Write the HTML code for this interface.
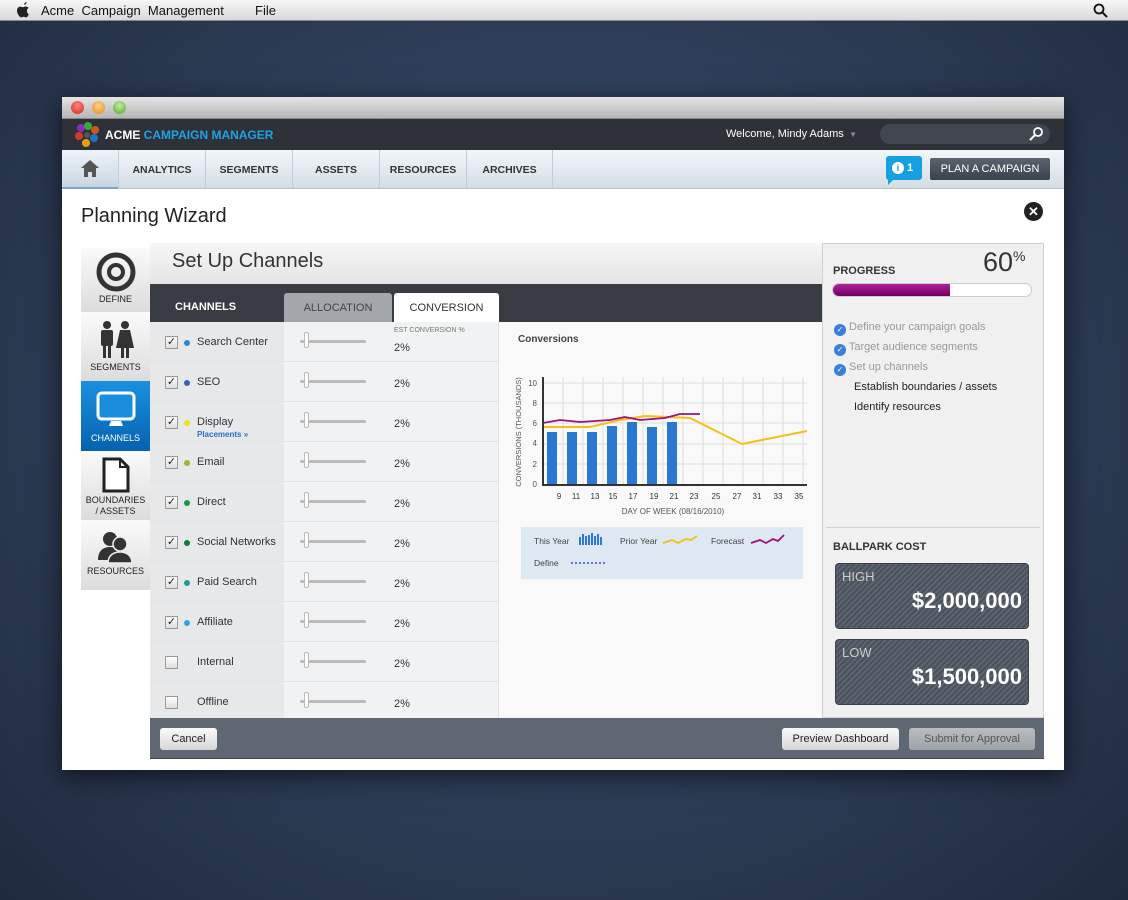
<!DOCTYPE html>
<html><head><meta charset="utf-8"><style>
*{margin:0;padding:0;box-sizing:border-box}
body{width:1128px;height:900px;overflow:hidden;position:relative;font-family:"Liberation Sans",sans-serif;background:radial-gradient(ellipse at 50% 45%,#3c4d6a 0%,#2e3d57 55%,#1f2a3e 100%)}
.a{position:absolute}
.menubar{left:0;top:0;width:1128px;height:21px;background:linear-gradient(#f7f7f7,#d9d9d9);border-bottom:1px solid #8a8a8a;font-size:13px;color:#111}
.win{left:62px;top:97px;width:1002px;height:673px;background:#fff;box-shadow:0 6px 25px rgba(0,0,0,.6)}
.tb{left:0;top:0;width:1002px;height:22px;background:linear-gradient(#e4e4e4,#b6b6b6);border-bottom:1px solid #888}
.dot{width:13px;height:13px;border-radius:50%;top:4px}
.hdr{left:0;top:22px;width:1002px;height:31px;background:#2e3137}
.nav{left:0;top:53px;width:1002px;height:39px;background:linear-gradient(#f2f6f9,#d4dde5);border-bottom:1px solid #b7c0c8}
.ni{top:0;height:39px;border-left:1px solid #c3ccd4;font-size:10.5px;font-weight:bold;color:#333;text-align:center;line-height:40px}
.side{left:19px;width:69px;background:linear-gradient(#fafafa,#dcdcdc);font-size:9px;color:#222;text-align:center}
.row{left:88px;width:672px;height:40px;border-bottom:1px solid #e0e2e4}
.cb{left:15px;top:14px;width:13px;height:13px;border:1px solid #999;background:linear-gradient(#fff,#ddd);font-size:11px;line-height:11px;text-align:center;color:#222}
.cd{left:34px;top:18px;width:6px;height:6px;border-radius:50%}
.nm{left:47px;top:14px;font-size:11px;color:#333}
.sl{left:150px;top:18px;width:66px;height:3px;background:#bbb;border-radius:2px}
.kn{left:154px;top:10px;width:5px;height:16px;background:#fff;border:1px solid #bbb;border-radius:2px}
.pc{left:244px;top:16px;font-size:11px;color:#333}
.btn{height:22px;border-radius:3px;background:linear-gradient(#fafafa,#d6d6d6);font-size:11px;color:#222;text-align:center;line-height:22px}
.cost{left:14px;width:194px;height:66px;border-radius:4px;background:repeating-linear-gradient(135deg,#4a515c 0 2px,#5c646f 2px 4px);border:1px solid #3a4048}
</style></head><body>
<div class="a menubar">
<svg class="a" style="left:16px;top:2px" width="15" height="17" viewBox="0 0 15 17"><path d="M10.5 0c.2 1.3-.9 2.8-2.3 2.9C8 1.6 9.2.2 10.5 0zM12.8 12.2c-.6 1.4-1.5 3.2-2.7 3.2-1 0-1.3-.6-2.5-.6s-1.5.6-2.5.6C3.900 15.400 1 12 1 8.600 1 6 2.700 4.600 4.300 4.600c1 0 1.800.6 2.500.6.6 0 1.600-.7 2.800-.7.5 0 2 .1 3 1.500-2.500 1.500-2 5 .2 6.200z" fill="#222"/></svg>
<div class="a" style="left:41px;top:3px">Acme&nbsp; Campaign&nbsp; Management</div>
<div class="a" style="left:255px;top:3px">File</div>
<svg class="a" style="left:1093px;top:3px" width="15" height="15"><circle cx="6" cy="6" r="4.5" stroke="#111" stroke-width="1.8" fill="none"/><path d="M9.500 9.500L14 14" stroke="#111" stroke-width="2"/></svg>
</div>

<div class="a win">
<div class="a tb">
<div class="a dot" style="left:9px;background:radial-gradient(circle at 50% 35%,#ff8a80,#d2201a)"></div>
<div class="a dot" style="left:30px;background:radial-gradient(circle at 50% 35%,#ffd28a,#e58a12)"></div>
<div class="a dot" style="left:51px;background:radial-gradient(circle at 50% 35%,#bff09a,#53a52d)"></div>
</div>
<div class="a hdr">
<svg class="a" style="left:11px;top:3px" width="28" height="26"><circle cx="8" cy="6" r="4" fill="#8a2fb8"/><circle cx="15" cy="4" r="4" fill="#3aa83a"/><circle cx="22" cy="8" r="4" fill="#c85a1a"/><circle cx="6" cy="14" r="4" fill="#d23a2a"/><circle cx="21" cy="16" r="4" fill="#1a78c8"/><circle cx="13" cy="21" r="4" fill="#e8a010"/><circle cx="14" cy="13" r="3" fill="#555"/></svg>
<div class="a" style="left:43px;top:9px;font-size:12px;font-weight:bold;color:#fff">ACME <span style="color:#1ea2ea">CAMPAIGN MANAGER</span></div>
<div class="a" style="left:664px;top:9px;font-size:11px;color:#fff">Welcome, Mindy Adams <span style="color:#888;font-size:8px">&nbsp;▼</span></div>
<div class="a" style="left:818px;top:5px;width:170px;height:20px;border-radius:10px;background:#42464e"></div>
<svg class="a" style="left:966px;top:7px" width="16" height="16"><circle cx="10" cy="6" r="4" stroke="#fff" stroke-width="1.8" fill="none"/><path d="M7 9L2 14" stroke="#fff" stroke-width="2.200"/></svg>
</div>
<div class="a nav">
<div class="a" style="left:0;top:0;width:56px;height:39px;background:linear-gradient(#eef3f8,#c8d6e2);border-bottom:2px solid #7aa4c8"></div>
<svg class="a" style="left:18px;top:9px" width="20" height="19"><path d="M10 1L1 9h3v9h4v-5h4v5h4V9h3z" fill="#555"/></svg>
<div class="a ni" style="left:56px;width:87px">ANALYTICS</div>
<div class="a ni" style="left:143px;width:87px">SEGMENTS</div>
<div class="a ni" style="left:230px;width:87px">ASSETS</div>
<div class="a ni" style="left:317px;width:87px">RESOURCES</div>
<div class="a ni" style="left:404px;width:87px;border-right:1px solid #c3ccd4">ARCHIVES</div>
<div class="a" style="left:824px;top:6px;width:36px;height:24px;background:#16a0e0;border-radius:3px;color:#fff;font-size:11px;font-weight:bold;line-height:24px;padding-left:6px"><span style="display:inline-block;width:12px;height:12px;border-radius:50%;background:#fff;color:#16a0e0;font-size:9px;line-height:12px;text-align:center">i</span> 1</div>
<div class="a" style="left:826px;top:29px;width:0;height:0;border-left:6px solid #16a0e0;border-bottom:6px solid transparent"></div>
<div class="a" style="left:868px;top:8px;width:120px;height:22px;background:linear-gradient(#5a636e,#3a424c);border-radius:2px;color:#fff;font-size:11px;line-height:22px;text-align:center">PLAN A CAMPAIGN</div>
</div>

<div class="a" style="left:19px;top:108px;font-size:20px;color:#222">Planning Wizard</div>
<div class="a" style="left:962px;top:105px;width:19px;height:19px;border-radius:50%;background:#222;color:#fff;font-size:13px;font-weight:bold;line-height:19px;text-align:center">✕</div>

<div class="a side" style="top:151px;height:64px"><svg style="margin-top:4px" width="40" height="40"><circle cx="20" cy="20" r="17" stroke="#333" stroke-width="5" fill="none"/><circle cx="20" cy="20" r="7" stroke="#333" stroke-width="4" fill="none"/></svg><div>DEFINE</div></div>
<div class="a side" style="top:215px;height:69px"><svg style="margin-top:8px" width="40" height="40"><circle cx="11" cy="5" r="4" fill="#333"/><rect x="5" y="10" width="12" height="16" rx="2" fill="#333"/><rect x="7" y="24" width="3" height="14" fill="#333"/><rect x="12" y="24" width="3" height="14" fill="#333"/><circle cx="29" cy="5" r="4" fill="#333"/><path d="M24 10h10l4 18h-18z" fill="#333"/><rect x="25" y="26" width="3" height="12" fill="#333"/><rect x="30" y="26" width="3" height="12" fill="#333"/></svg><div>SEGMENTS</div></div>
<div class="a side" style="top:284px;height:70px;background:linear-gradient(#1a90e0,#0562b0);color:#fff"><svg style="margin-top:10px" width="40" height="38"><rect x="2" y="2" width="36" height="26" rx="4" fill="#1a8ede" stroke="#fff" stroke-width="3"/><path d="M15 30h10l2 5h-14z" fill="#fff"/></svg><div style="margin-top:2px">CHANNELS</div></div>
<div class="a" style="left:88px;top:309px;width:0;height:0;border-left:10px solid #0a74c4;border-top:10px solid transparent;border-bottom:10px solid transparent"></div>
<div class="a side" style="top:354px;height:69px"><svg style="margin-top:6px" width="30" height="36"><path d="M3 2h16l8 8v24H3z" fill="#fff" stroke="#222" stroke-width="3"/><path d="M19 2v8h8" fill="none" stroke="#222" stroke-width="2"/></svg><div style="line-height:11px">BOUNDARIES<br>/ ASSETS</div></div>
<div class="a side" style="top:423px;height:70px"><svg style="margin-top:10px" width="40" height="34"><circle cx="14" cy="9" r="7" fill="#333"/><path d="M2 30c0-10 6-13 12-13s10 3 10 8v5z" fill="#333"/><circle cx="24" cy="14" r="7" fill="#333" stroke="#eee" stroke-width="1.500"/><path d="M12 33c0-8 6-11 12-11s12 3 12 11z" fill="#333" stroke="#eee" stroke-width="1.500"/></svg><div>RESOURCES</div></div>

<div class="a" style="left:88px;top:146px;width:672px;height:41px;background:linear-gradient(#f6f6f6,#e4e4e4)"></div>
<div class="a" style="left:110px;top:153px;font-size:20px;color:#333">Set Up Channels</div>
<div class="a" style="left:88px;top:187px;width:672px;height:38px;background:#393c43"></div>
<div class="a" style="left:113px;top:204px;font-size:11px;font-weight:bold;color:#fff">CHANNELS</div>
<div class="a" style="left:222px;top:196px;width:108px;height:29px;background:#a3a7ac;border-radius:3px 3px 0 0;font-size:11px;color:#444;text-align:center;line-height:30px">ALLOCATION</div>
<div class="a" style="left:332px;top:196px;width:105px;height:29px;background:#fff;border-radius:3px 3px 0 0;font-size:11px;color:#333;text-align:center;line-height:30px">CONVERSION</div>

<div class="a" style="left:88px;top:225px;width:134px;height:396px;background:#e6e8e9"></div>
<div class="a" style="left:222px;top:225px;width:214px;height:396px;background:#f1f2f3"></div>
<div class="a" style="left:436px;top:225px;width:324px;height:396px;background:#f9f9f9;border-left:1px solid #e2e2e2"></div>
<div class="a" style="left:332px;top:230px;font-size:7px;color:#777">EST CONVERSION %</div>

<div class="a row" style="top:225px;width:348px"><div class="a cb">✓</div><div class="a cd" style="background:#2a8ad0"></div><div class="a nm">Search Center</div><div class="a sl"></div><div class="a kn"></div><div class="a pc" style="top:20px">2%</div></div>
<div class="a row" style="top:265px;width:348px"><div class="a cb">✓</div><div class="a cd" style="background:#3a62b0"></div><div class="a nm">SEO</div><div class="a sl"></div><div class="a kn"></div><div class="a pc">2%</div></div>
<div class="a row" style="top:305px;width:348px"><div class="a cb">✓</div><div class="a cd" style="background:#f0e020"></div><div class="a nm">Display</div><div class="a" style="left:47px;top:28px;font-size:8px;font-weight:bold;color:#2a70c8">Placements »</div><div class="a sl"></div><div class="a kn"></div><div class="a pc">2%</div></div>
<div class="a row" style="top:345px;width:348px"><div class="a cb">✓</div><div class="a cd" style="background:#9ab830"></div><div class="a nm">Email</div><div class="a sl"></div><div class="a kn"></div><div class="a pc">2%</div></div>
<div class="a row" style="top:385px;width:348px"><div class="a cb">✓</div><div class="a cd" style="background:#1a9a40"></div><div class="a nm">Direct</div><div class="a sl"></div><div class="a kn"></div><div class="a pc">2%</div></div>
<div class="a row" style="top:425px;width:348px"><div class="a cb">✓</div><div class="a cd" style="background:#157a3a"></div><div class="a nm">Social Networks</div><div class="a sl"></div><div class="a kn"></div><div class="a pc">2%</div></div>
<div class="a row" style="top:465px;width:348px"><div class="a cb">✓</div><div class="a cd" style="background:#1aa090"></div><div class="a nm">Paid Search</div><div class="a sl"></div><div class="a kn"></div><div class="a pc">2%</div></div>
<div class="a row" style="top:505px;width:348px"><div class="a cb">✓</div><div class="a cd" style="background:#2aa8e0"></div><div class="a nm">Affiliate</div><div class="a sl"></div><div class="a kn"></div><div class="a pc">2%</div></div>
<div class="a row" style="top:545px;width:348px"><div class="a cb"></div><div class="a nm">Internal</div><div class="a sl"></div><div class="a kn"></div><div class="a pc">2%</div></div>
<div class="a row" style="top:585px;width:348px;border:0"><div class="a cb"></div><div class="a nm">Offline</div><div class="a sl"></div><div class="a kn"></div><div class="a pc">2%</div></div>

<svg class="a" style="left:436px;top:225px" width="324" height="396" font-family="Liberation Sans, sans-serif">
<text x="20" y="20" font-size="10" font-weight="bold" fill="#444">Conversions</text>
<g stroke="#ddd" stroke-width="1">
<path d="M45 61H309M45 81H309M45 101H309M45 122H309M45 142H309"/>
<path d="M65 55V163M85 55V163M105 55V163M125 55V163M145 55V163M165 55V163M185 55V163M205 55V163M225 55V163M245 55V163M265 55V163M285 55V163M305 55V163"/>
</g>
<g fill="#2a78d0">
<rect x="49" y="110" width="10" height="53"/><rect x="69" y="110" width="10" height="53"/><rect x="89" y="110" width="10" height="53"/><rect x="109" y="104" width="10" height="59"/><rect x="129" y="100" width="10" height="63"/><rect x="149" y="105" width="10" height="58"/><rect x="169" y="100" width="10" height="63"/>
</g>
<path d="M45 105L92 105L122 98L147 94L192 96L244 122L309 109" stroke="#f5c010" stroke-width="2" fill="none"/>
<path d="M45 101L62 98L82 100L112 98L127 95L142 98L167 96L182 92L202 92" stroke="#a0107a" stroke-width="1.800" fill="none"/>
<path d="M45 55V163H309" stroke="#333" stroke-width="2" fill="none"/>
<g font-size="8" fill="#555" text-anchor="end"><text x="39" y="64">10</text><text x="39" y="84">8</text><text x="39" y="104">6</text><text x="39" y="124">4</text><text x="39" y="145">2</text><text x="39" y="165">0</text></g>
<g font-size="8" fill="#333" text-anchor="middle"><text x="61" y="177">9</text><text x="78" y="177">11</text><text x="97" y="177">13</text><text x="115" y="177">15</text><text x="135" y="177">17</text><text x="156" y="177">19</text><text x="176" y="177">21</text><text x="196" y="177">23</text><text x="218" y="177">25</text><text x="239" y="177">27</text><text x="259" y="177">31</text><text x="280" y="177">33</text><text x="301" y="177">35</text></g>
<text x="175" y="192" font-size="8" fill="#555" text-anchor="middle">DAY OF WEEK (08/16/2010)</text>
<text transform="translate(23,110) rotate(-90)" font-size="7.500" fill="#555" text-anchor="middle">CONVERSIONS (THOUSANDS)</text>
<rect x="23" y="205" width="282" height="52" fill="#dde8f3"/>
<g font-size="8.500" fill="#444"><text x="36" y="222">This Year</text><text x="122" y="222">Prior Year</text><text x="213" y="222">Forecast</text><text x="36" y="244">Define</text></g>
<g fill="#2a78d0"><rect x="81" y="215" width="2" height="8"/><rect x="84" y="212" width="2" height="11"/><rect x="87" y="214" width="2" height="9"/><rect x="90" y="213" width="2" height="10"/><rect x="93" y="211" width="2" height="12"/><rect x="96" y="214" width="2" height="9"/><rect x="99" y="212" width="2" height="11"/><rect x="102" y="215" width="2" height="8"/></g>
<path d="M165 221l9-3 6 3 8-4 5 1 6-4" stroke="#f5c010" stroke-width="1.800" fill="none"/>
<path d="M253 221l9-3 6 3 7-4 5 2 6-6" stroke="#a0107a" stroke-width="1.800" fill="none"/>
<path d="M73 241H108" stroke="#3a50c0" stroke-width="1.500" stroke-dasharray="2 2"/>
</svg>

<div class="a" style="left:760px;top:146px;width:222px;height:475px;background:#f0f0f0;border:1px solid #d0d0d0"></div>
<div class="a" style="left:771px;top:168px;font-size:11px;font-weight:bold;color:#333">PROGRESS</div>
<div class="a" style="left:921px;top:150px;font-size:27px;color:#333">60<sup style="font-size:14px">%</sup></div>
<div class="a" style="left:770px;top:186px;width:200px;height:14px;border-radius:7px;background:#fff;border:1px solid #ccc;overflow:hidden"><div style="width:59%;height:100%;background:linear-gradient(#b020a0,#700060)"></div></div>
<div class="a" style="left:772px;top:220px;font-size:11px;line-height:20px;color:#999">
<div><span style="display:inline-block;width:12px;height:12px;border-radius:50%;background:#3a80d8;color:#fff;font-size:8px;line-height:12px;text-align:center;vertical-align:-2px">✓</span> Define your campaign goals</div>
<div><span style="display:inline-block;width:12px;height:12px;border-radius:50%;background:#3a80d8;color:#fff;font-size:8px;line-height:12px;text-align:center;vertical-align:-2px">✓</span> Target audience segments</div>
<div><span style="display:inline-block;width:12px;height:12px;border-radius:50%;background:#3a80d8;color:#fff;font-size:8px;line-height:12px;text-align:center;vertical-align:-2px">✓</span> Set up channels</div>
<div style="color:#222;padding-left:20px">Establish boundaries / assets</div>
<div style="color:#222;padding-left:20px">Identify resources</div>
</div>
<div class="a" style="left:764px;top:430px;width:214px;height:1px;background:#d0d0d0"></div>
<div class="a" style="left:771px;top:444px;font-size:11px;font-weight:bold;color:#333">BALLPARK COST</div>
<div class="a cost" style="left:773px;top:466px"><div class="a" style="left:6px;top:5px;font-size:13px;color:#ccc">HIGH</div><div class="a" style="right:6px;top:24px;font-size:22px;font-weight:bold;color:#fff">$2,000,000</div></div>
<div class="a cost" style="left:773px;top:542px"><div class="a" style="left:6px;top:5px;font-size:13px;color:#ccc">LOW</div><div class="a" style="right:6px;top:24px;font-size:22px;font-weight:bold;color:#fff">$1,500,000</div></div>

<div class="a" style="left:88px;top:621px;width:894px;height:41px;background:#5f6772;border-bottom:1px solid #444"></div>
<div class="a btn" style="left:98px;top:631px;width:57px">Cancel</div>
<div class="a btn" style="left:720px;top:631px;width:117px">Preview Dashboard</div>
<div class="a btn" style="left:847px;top:631px;width:126px;background:linear-gradient(#b9bdc2,#9ea3a9);color:#555">Submit for Approval</div>
</div>
</body></html>
